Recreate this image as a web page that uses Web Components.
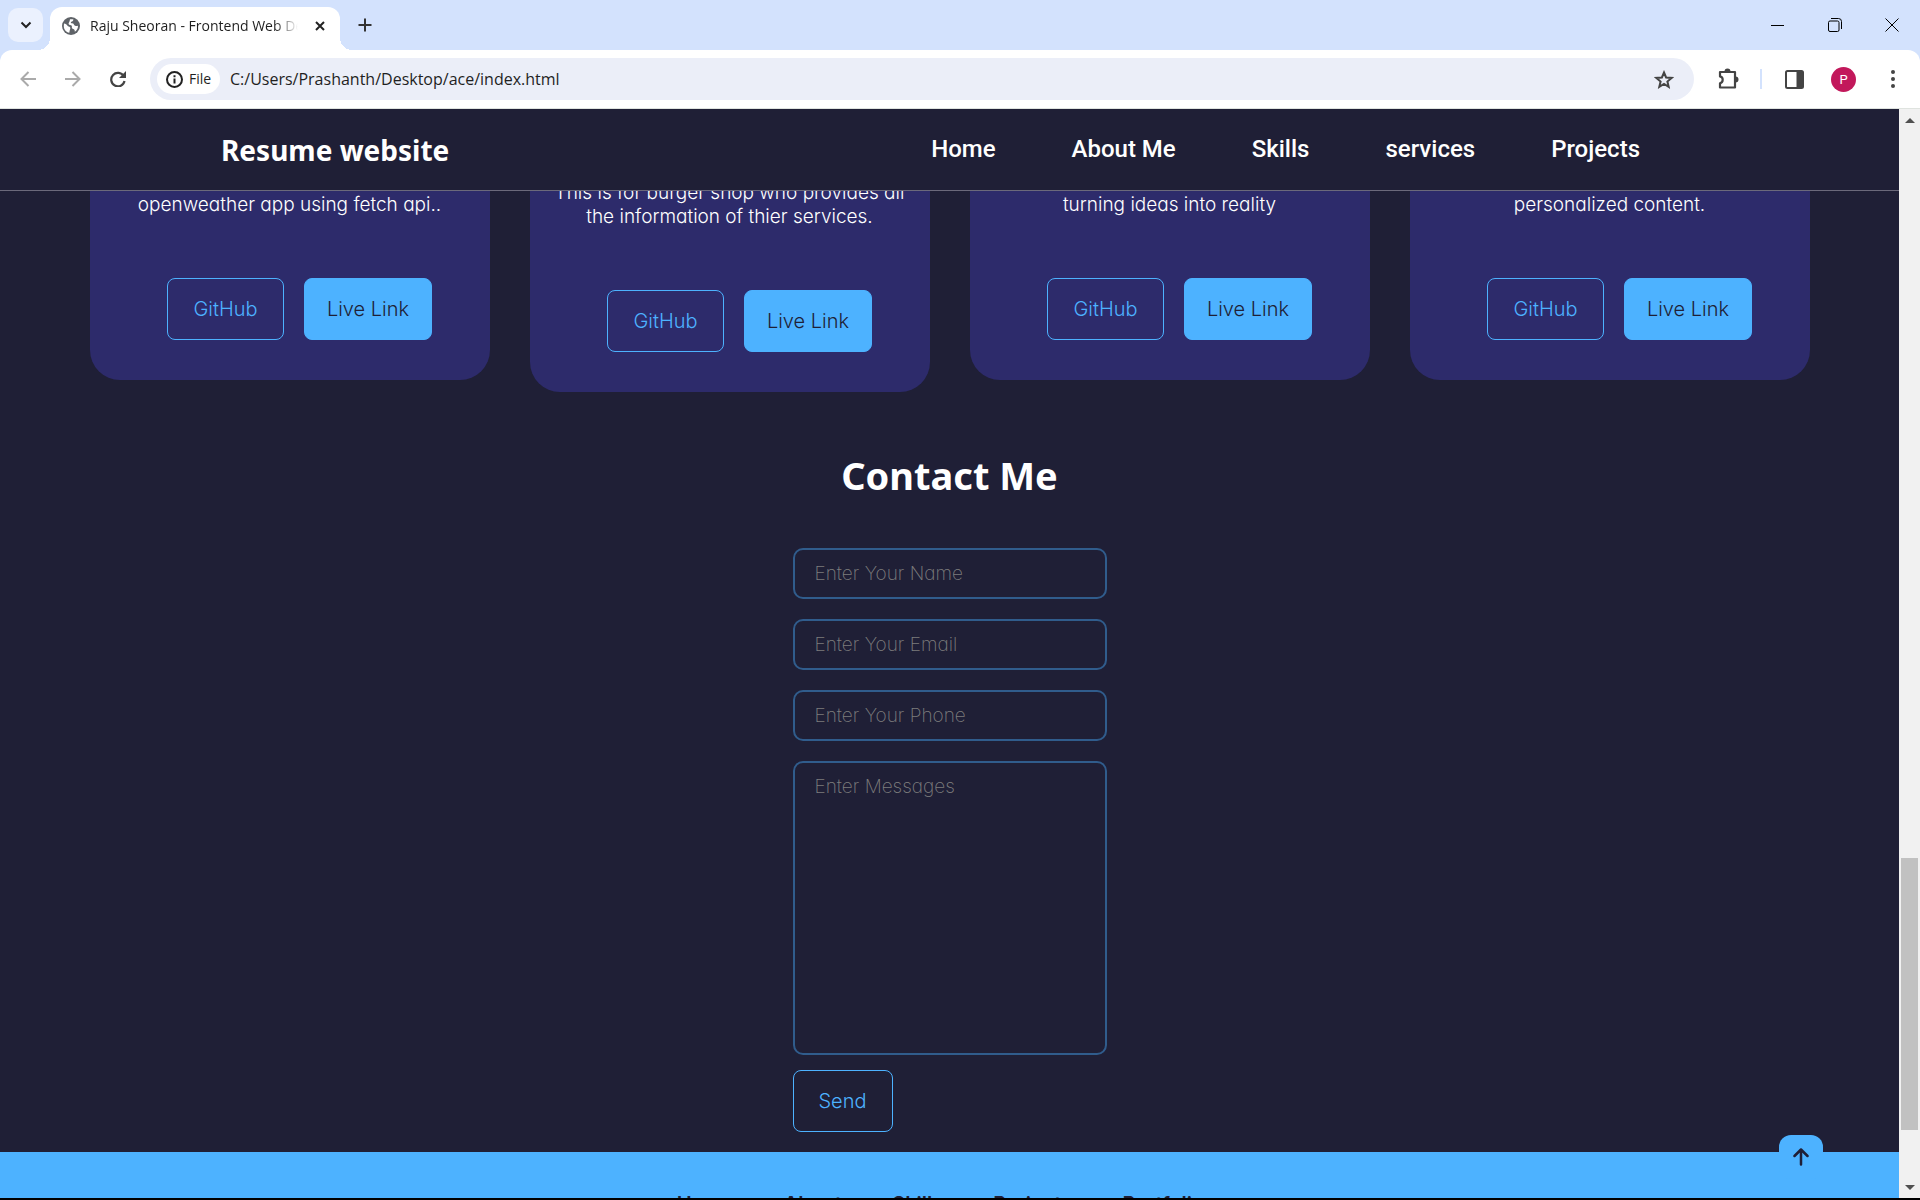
<!DOCTYPE html>
<html lang="en">
<head>
<meta charset="utf-8">
<title>Raju Sheoran - Frontend Web Developer</title>
<style>
  html, body { margin: 0; height: 100%; overflow: hidden; }
  body {
    --ink: #1f1f36; --card: #2d2b6b; --sky: #4db2ff;
    --ui: "Open Sans", "Noto Sans", sans-serif;
    --body-font: Inter, "Open Sans", sans-serif;
    --title-font: "Noto Sans", "Open Sans", sans-serif;
    background: #000;
  }
</style>
</head>
<body>
<browser-window>
  <tab-strip slot="tabs">Raju Sheoran - Frontend Web Developer</tab-strip>
  <tool-bar slot="toolbar" address="C:/Users/Prashanth/Desktop/ace/index.html"></tool-bar>
  <site-nav></site-nav>
  <project-list>
    <project-card>openweather app using fetch api..</project-card>
    <project-card>This is for burger shop who provides all<br>the information of thier services.</project-card>
    <project-card>turning ideas into reality</project-card>
    <project-card>personalized content.</project-card>
  </project-list>
  <contact-form></contact-form>
  <site-footer></site-footer>
  <scroll-rail slot="rail"></scroll-rail>
</browser-window>
<script>
function define(name, html) {
  const template = document.createElement('template');
  template.innerHTML = html;
  customElements.define(name, class extends HTMLElement {
    constructor() {
      super();
      this.attachShadow({ mode: 'open' }).append(template.content.cloneNode(true));
    }
    connectedCallback() {
      const field = this.shadowRoot.querySelector('[data-address]');
      if (field) field.value = this.getAttribute('address') || '';
    }
  });
}

define('browser-window', `
<style>
  :host { display: grid; grid-template-rows: 50px 59px minmax(0, 1fr); height: 100vh; box-sizing: border-box; padding-bottom: 2px; background: #000; }
  .view { display: grid; grid-template-columns: minmax(0, 1fr) 21px; min-height: 0; }
  .page { background: var(--ink); overflow: hidden; color: #fff; min-height: 0; }
</style>
<slot name="tabs"></slot>
<slot name="toolbar"></slot>
<div class="view"><div class="page"><slot></slot></div><slot name="rail"></slot></div>`);

define('tab-strip', `
<style>
  :host { display: flex; align-items: flex-end; background: #d3e2fd; font: 14px/20px var(--ui); color: #1f1f1f; }
  button { border: 0; padding: 0; background: none; display: flex; align-items: center; justify-content: center; color: #333; }
  .search { width: 35px; height: 34px; margin: 0 7px 8px 8px; border-radius: 10px; background: #ebf1fe; }
  .tab { box-sizing: border-box; position: relative; width: 290px; height: 43px; padding: 0 12px 6px; display: flex; align-items: center; background: #fff; border-radius: 12px 12px 0 0; }
  .tab::before, .tab::after { content: ""; position: absolute; bottom: 0; width: 12px; height: 12px; }
  .tab::before { left: -12px; background: radial-gradient(circle at 0 0, transparent 12px, #fff 12px); }
  .tab::after { right: -12px; background: radial-gradient(circle at 100% 0, transparent 12px, #fff 12px); }
  .title { flex: 1; margin: 0 10px 0 10px; white-space: nowrap; overflow: hidden; -webkit-mask: linear-gradient(90deg, #000 88%, transparent 99%); mask: linear-gradient(90deg, #000 88%, transparent 99%); }
  .close { width: 20px; height: 20px; margin-right: -2px; }
  .new { width: 34px; height: 34px; margin: 0 0 8px 8px; }
  .window { margin-left: auto; display: flex; height: 50px; }
  .window button { width: 57px; color: #000; }
</style>
<button class="search" aria-label="Search tabs"><svg width="12" height="8" viewBox="0 0 12 8" fill="none" stroke="#222" stroke-width="2"><path d="M1.5 1.5 6 6l4.500-4.500"/></svg></button>
<div class="tab">
  <svg width="18" height="18" viewBox="0 0 18 18"><circle cx="9" cy="9" r="9" fill="#5f6368"/><path d="M2 6.500c1.500 0 3 1 3.500 2.300.5 1 1.800.7 2.500 1.500.8 1 0 2.200-.3 3.200l-.4 2.300C4 15.200 1.800 12.500 1.800 9zM11.300 2.200c.3 1.700-1 2-2 2.500-.9.600-.4 1.700.7 1.600 1.400-.1 1.800 1 2.200 1.800.6 1 2 1 3.800.6.1 2.700-1.200 4.800-3.200 6 .2-1.500-.4-2.500-1.700-2.800-1.200-.3-1.400-1.300-1.200-2.300.1-1-.7-1.400-1.800-1.500-1.500-.2-2-1.700-1-2.900.7-.8.6-2 .9-3z" fill="#fff"/></svg>
  <span class="title"><slot></slot></span>
  <button class="close" aria-label="Close tab"><svg width="10" height="10" viewBox="0 0 10 10" stroke="#222" stroke-width="2"><path d="m1 1 8 8M9 1 1 9"/></svg></button>
</div>
<button class="new" aria-label="New tab"><svg width="14" height="14" viewBox="0 0 14 14" stroke="#333" stroke-width="2"><path d="M7 0.500v13M.5 7h13"/></svg></button>
<div class="window">
  <button aria-label="Minimize"><svg width="13" height="13" viewBox="0 0 13 13" stroke="#000"><path d="M0 6.500h13"/></svg></button>
  <button aria-label="Restore"><svg width="14" height="14" viewBox="0 0 14 14" stroke="#000" fill="none"><rect x=".5" y="3" width="10.500" height="10.500" rx="1.500"/><path d="M3 .5h7.500a3 3 0 0 1 3 3V11"/></svg></button>
  <button aria-label="Close window"><svg width="14" height="14" viewBox="0 0 14 14" stroke="#000"><path d="m.5.5 13 13M13.500.5l-13 13"/></svg></button>
</div>`);

define('tool-bar', `
<style>
  :host { display: block; background: #d3e2fd; color: #1f1f1f; }
  .bar { box-sizing: border-box; height: 100%; display: flex; align-items: center; background: #fff; border-radius: 12px 12px 0 0; border-bottom: 1px solid #dfe3df; padding: 0 5px; font: 16px/24px var(--ui); }
  button { border: 0; padding: 0; background: none; width: 45px; height: 42px; display: flex; align-items: center; justify-content: center; flex: none; }
  .omni { flex: 1; min-width: 0; height: 42px; margin-left: 10px; border-radius: 21px; background: #ebeef8; display: flex; align-items: center; padding: 0 7px; }
  .omni .star { width: 46px; }
  .chip { width: 63px; height: 30px; border-radius: 15px; background: #fff; gap: 6px; font: 14px/20px var(--ui); color: #1f1f1f; }
  input { flex: 1; min-width: 0; border: 0; outline: 0; background: none; padding: 0; margin-left: 10px; font: 16px/24px var(--ui); color: #1f1f1f; height: 30px; }
  .rule { width: 2px; height: 20px; background: #d3e2fd; margin: 0 10px; }
  .avatar { width: 25px; height: 25px; border-radius: 50%; background: #c2185b; color: #fff; font: 13px/25px Roboto, sans-serif; margin: 0 14px; }
  .ext { margin-left: 11px; }
</style>
<div class="bar">
  <button aria-label="Back"><svg width="16" height="16" viewBox="0 0 16 16" fill="none" stroke="#aaa" stroke-width="2"><path d="M16 8H2M8.500 1 1.500 8l7 7"/></svg></button>
  <button aria-label="Forward"><svg width="16" height="16" viewBox="0 0 16 16" fill="none" stroke="#aaa" stroke-width="2"><path d="M0 8h14M7.500 1l7 7-7 7"/></svg></button>
  <button aria-label="Reload"><svg width="16" height="16" viewBox="0 0 16 16"><path d="M13.700 5.200A6.700 6.700 0 1 0 14.500 10" fill="none" stroke="#444" stroke-width="2.200"/><path d="M16 0v7H9z" fill="#444"/></svg></button>
  <div class="omni">
    <button class="chip"><svg width="17" height="17" viewBox="0 0 17 17"><circle cx="8.500" cy="8.500" r="7.500" fill="none" stroke="#222" stroke-width="2"/><path d="M7.500 7.500h2v5h-2zM7.500 4.300h2v2h-2z" fill="#222"/></svg><span>File</span></button>
    <input data-address aria-label="Address">
    <button class="star" aria-label="Bookmark this tab"><svg width="20" height="19" viewBox="0 0 20 19" fill="none" stroke="#444" stroke-width="2"><path d="m10 2.500 2.100 5 5.500.4-4.200 3.600 1.300 5.300L10 14l-4.700 2.800 1.300-5.300L2.400 7.900l5.500-.4z"/></svg></button>
  </div>
  <button class="ext" aria-label="Extensions"><svg width="22" height="22" viewBox="0 0 22 22"><path d="M3 4h15v15.500H3v-4.300c3.600-.8 3.600-6 0-6.800z" fill="none" stroke="#444" stroke-width="2.200" stroke-linejoin="round"/><path d="M7.500 3.500a3 3 0 0 1 6 0zM18.500 8.500a3 3 0 0 1 0 6z" fill="#444"/></svg></button>
  <span class="rule"></span>
  <button aria-label="Side panel"><svg width="19" height="19" viewBox="0 0 19 19"><rect x="1" y="1" width="17" height="17" rx="1.500" fill="none" stroke="#444" stroke-width="2"/><path d="M11.500 1H18v17h-6.500z" fill="#444"/></svg></button>
  <button class="avatar" aria-label="Profile">P</button>
  <button aria-label="Menu"><svg width="4" height="18" viewBox="0 0 4 18" fill="#444"><circle cx="2" cy="2" r="2"/><circle cx="2" cy="9" r="2"/><circle cx="2" cy="16" r="2"/></svg></button>
</div>`);

define('site-nav', `
<style>
  :host { display: flex; position: relative; z-index: 1; align-items: center; justify-content: space-between; box-sizing: border-box; height: 82px; background: var(--ink); border-bottom: 1px solid #6b697b; padding: 0 259px 0 221px; }
  a { color: #fff; text-decoration: none; }
  .brand { font: 700 28px/40px var(--title-font); }
  nav { display: flex; gap: 76px; padding-bottom: 2px; font: 500 24px/32px Roboto, sans-serif; }
</style>
<a class="brand" href="#top">Resume website</a>
<nav><a href="#home">Home</a><a href="#about">About Me</a><a href="#skills">Skills</a><a href="#services">services</a><a href="#projects">Projects</a></nav>`);

define('project-list', `
<style>
  :host { display: flex; align-items: center; justify-content: center; gap: 40px; margin-top: -111px; }
</style>
<slot></slot>`);

define('project-card', `
<style>
  :host { display: block; box-sizing: border-box; flex: 0 1 400px; padding: 101px 20px 40px; border-radius: 30px; background: var(--card); text-align: center; }
  p { margin: 0; font: 300 19px/24px var(--body-font); font-feature-settings: "cv11"; white-space: nowrap; }
  .links { display: flex; justify-content: center; margin-top: 61px; }
  a { box-sizing: border-box; width: 117px; height: 62px; margin-left: 20px; border: 1px solid var(--sky); border-radius: 8px; font: 300 20px/60px var(--body-font); color: var(--sky); text-decoration: none; }
  a.live { width: 128px; background: var(--sky); color: var(--ink); }
</style>
<p><slot></slot></p>
<div class="links"><a href="#github">GitHub</a><a class="live" href="#live">Live Link</a></div>`);

define('contact-form', `
<style>
  :host { display: flex; flex-direction: column; align-items: center; padding: 55px 0 20px; }
  h2 { margin: 0 0 45px; font: 700 38px/56px var(--title-font); }
  form { display: flex; flex-direction: column; width: 314px; gap: 20px; }
  input, textarea { box-sizing: border-box; display: block; width: 100%; margin: 0; border: 2px solid #305c8c; border-radius: 10px; background: none; outline: 0; padding: 11px 20px; font: 200 19px/25px var(--body-font); font-feature-settings: "cv11"; color: #fff; resize: none; }
  input { height: 51px; }
  textarea { height: 294px; }
  ::placeholder { color: #7d7d7d; opacity: 1; }
  button { align-self: flex-start; width: 100px; height: 62px; margin-top: -5px; padding: 0; border: 1px solid var(--sky); border-radius: 8px; background: none; color: var(--sky); font: 300 20px/30px var(--body-font); }
</style>
<h2>Contact Me</h2>
<form>
  <input type="text" placeholder="Enter Your Name" aria-label="Name">
  <input type="email" placeholder="Enter Your Email" aria-label="Email">
  <input type="tel" placeholder="Enter Your Phone" aria-label="Phone">
  <textarea placeholder="Enter Messages" aria-label="Message"></textarea>
  <button type="button">Send</button>
</form>`);

define('site-footer', `
<style>
  :host { display: block; position: relative; background: var(--sky); padding: 40px 0; }
  nav { display: flex; justify-content: center; gap: 50px; padding-right: 18px; font: 600 20px/24px var(--body-font); }
  nav a { color: var(--ink); text-decoration: none; }
  .top { position: absolute; right: 76px; top: -17px; width: 44px; height: 44px; border-radius: 12px; background: var(--sky); display: flex; align-items: center; justify-content: center; }
</style>
<nav><a href="#home">Home</a><a href="#about">About</a><a href="#skills">Skills</a><a href="#projects">Projects</a><a href="#portfolio">Portfolio</a></nav>
<a class="top" href="#top" aria-label="Back to top"><svg width="16" height="18" viewBox="0 0 16 18" fill="none" stroke="#1f1e36" stroke-width="2.500" stroke-linecap="round" stroke-linejoin="round"><path d="M8 16.500v-15M1.500 8 8 1.500 14.500 8"/></svg></a>`);

define('scroll-rail', `
<style>
  :host { display: flex; flex-direction: column; align-items: center; background: #f1f1f1; }
  button { border: 0; padding: 0; background: none; width: 21px; height: 22px; display: flex; align-items: center; justify-content: center; }
  .track { flex: 1; display: flex; flex-direction: column; }
  .before { flex: 727; }
  .thumb { flex: 272; width: 17px; background: #c1c1c1; }
  .after { flex: 46; }
</style>
<button aria-label="Scroll up"><svg width="10" height="5" viewBox="0 0 10 5"><path d="m0 5 5-5 5 5z" fill="#505050"/></svg></button>
<div class="track"><div class="before"></div><div class="thumb"></div><div class="after"></div></div>
<button aria-label="Scroll down"><svg width="10" height="5" viewBox="0 0 10 5"><path d="m0 0 5 5 5-5z" fill="#505050"/></svg></button>`);
</script>
</body>
</html>
